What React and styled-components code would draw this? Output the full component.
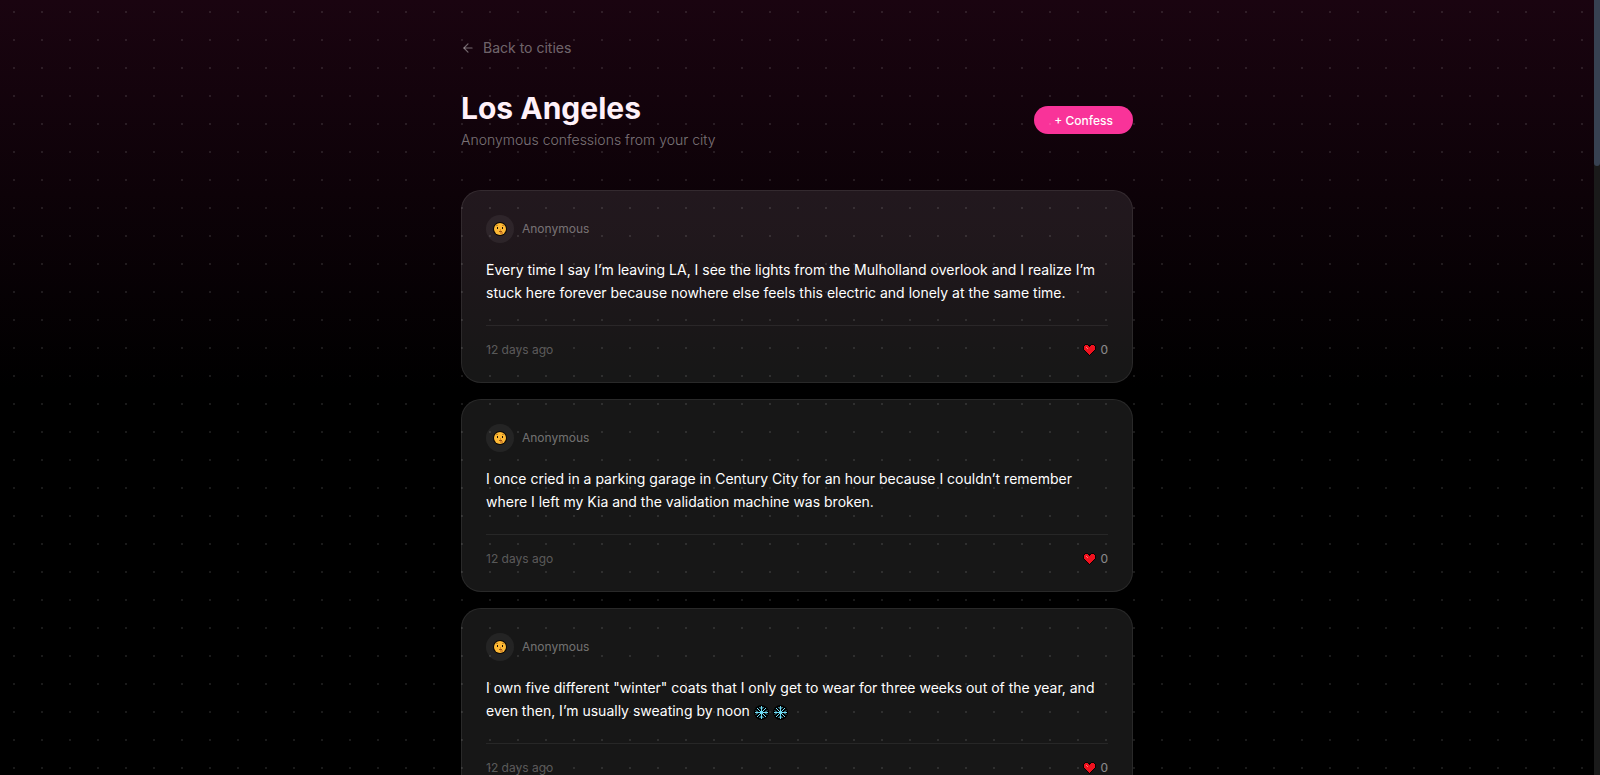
import styled, {createGlobalStyle} from 'styled-components';
import {ArrowLeft} from 'lucide-react';

const GlobalStyle = createGlobalStyle`
    * {
        box-sizing: border-box;
    }

    body {
        margin: 0;
        background-color: #000;
        color: #fff;
        font-family: Inter, sans-serif;
    }
`

const Screen = styled.div`
    position: relative;
    display: flex;
    height: 100vh;
    overflow: hidden;
    background: linear-gradient(to bottom, #1a0410 0%, #000 50%);
`

const Page = styled.main`
    flex: 1;
    padding: 38px 24px 0;
`

const Dots = styled.div`
    position: absolute;
    inset: 0 6px 0 0;
    pointer-events: none;
    background-image: radial-gradient(circle, rgba(255, 255, 255, 0.1) 1px, transparent 1px);
    background-size: 28px 28px;
    background-position: 0 -2px;
`

const Column = styled.div`
    max-width: 672px;
    margin: 0 auto;
`

const BackLink = styled.a`
    display: inline-flex;
    align-items: center;
    gap: 8px;
    color: rgba(255, 255, 255, 0.4);
    font-size: 14px;
    line-height: 20px;
    text-decoration: none;
`

const Header = styled.header`
    display: flex;
    align-items: center;
    justify-content: space-between;
    margin: 31px 0 40px;
`

const Title = styled.h1`
    margin: 0;
    font-size: 30px;
    line-height: 36px;
    font-weight: 700;
    color: #fff1f9;
`

const Subtitle = styled.p`
    margin: 4px 0 0;
    font-size: 14px;
    line-height: 20px;
    font-weight: 300;
    color: rgba(255, 255, 255, 0.45);
`

const Button = styled.button`
    height: 28px;
    padding: 0 20px;
    border: none;
    border-radius: 14px;
    background-color: #f93399;
    color: #fff;
    font-family: inherit;
    font-size: 12px;
    font-weight: 500;
    cursor: pointer;
`

const List = styled.div`
    display: flex;
    flex-direction: column;
    gap: 16px;
`

const Card = styled.article`
    padding: 24px;
    border: 1px solid rgba(255, 255, 255, 0.08);
    border-radius: 20px;
    background-color: rgba(255, 255, 255, 0.09);
`

const Author = styled.div`
    display: flex;
    align-items: center;
    gap: 8px;
    font-size: 12px;
    line-height: 16px;
    color: rgba(255, 255, 255, 0.4);
`

const Avatar = styled.span`
    display: flex;
    align-items: center;
    justify-content: center;
    width: 28px;
    height: 28px;
    border-radius: 50%;
    background-color: rgba(255, 255, 255, 0.06);
`

const Text = styled.p`
    margin: 15px 0 21px;
    font-size: 14px;
    line-height: 23px;
`

const Flakes = styled.span`
    display: inline-flex;
    gap: 4px;
    margin-left: 4px;
    vertical-align: middle;
`

const Footer = styled.footer`
    display: flex;
    align-items: center;
    justify-content: space-between;
    padding-top: 16px;
    border-top: 1px solid rgba(255, 255, 255, 0.07);
    font-size: 12px;
    line-height: 16px;
    color: rgba(255, 255, 255, 0.3);
`

const Like = styled.button`
    display: flex;
    align-items: center;
    gap: 4px;
    padding: 0;
    border: none;
    background: none;
    color: rgba(255, 255, 255, 0.5);
    font: inherit;
    cursor: pointer;
`

const Rail = styled.div`
    width: 6px;
    background-color: #1a1a1a;
`

const Thumb = styled.div`
    height: 166px;
    border-radius: 0 0 3px 3px;
    background-color: #374151;
`

const ShushFace = () => (
    <svg width="14" height="14" viewBox="0 0 14 14" aria-hidden="true">
        <circle cx="7" cy="7" r="7" fill="#0b0705" />
        <circle cx="7" cy="7" r="6" fill="#fdb935" />
        <path fill="#c98520" d="M3 3h2v1H3zM9 3h2v1H9z" />
        <path fill="#1a0f05" d="M4 5h1v2H4zM9 5h1v2H9z" />
        <path fill="#d98a2b" d="M7 7h1v2h1v1h1v2H7z" />
        <path fill="#9c5212" d="M6 9h3v1H6z" />
    </svg>
)

const Heart = () => (
    <svg width="13" height="12" viewBox="0 0 13 12" shapeRendering="crispEdges" aria-hidden="true">
        <path fill="#0a0202" d="M2 0h3v1h3V0h3v1h1v1h1v4h-1v1h-1v1h-1v1H9v1H8v1H7v1H6v-1H5v-1H4V9H3V8H2V7H1V6H0V2h1V1h1z" />
        <path fill="#f0121f" d="M2 1h3v1h1v1h1V2h1V1h3v1h1v4h-1v1h-1v1H9v1H8v1H7v1H6v-1H5V9H4V8H3V7H2V6H1V2h1z" />
        <path fill="#ff7a6b" d="M3 3h1v1H3zM4 4h1v1H4z" />
    </svg>
)

const Snowflake = () => (
    <svg width="15" height="15" viewBox="0 0 15 15" aria-hidden="true">
        <circle cx="7.5" cy="7.5" r="7.5" fill="#000" />
        <g fill="none" stroke="#6fdcf5">
            <path d="M7.5 1v13M1 7.5h13M3 3l9 9M12 3l-9 9" />
            <path d="M5.5 2l2 2l2-2M5.5 13l2-2l2 2M2 5.5l2 2l-2 2M13 5.5l-2 2l2 2" />
        </g>
    </svg>
)

const confessions = [
    {id: 1, flakes: false, text: 'Every time I say I’m leaving LA, I see the lights from the Mulholland overlook and I realize I’m stuck here forever because nowhere else feels this electric and lonely at the same time.'},
    {id: 2, flakes: false, text: 'I once cried in a parking garage in Century City for an hour because I couldn’t remember where I left my Kia and the validation machine was broken.'},
    {id: 3, flakes: true, text: 'I own five different "winter" coats that I only get to wear for three weeks out of the year, and even then, I’m usually sweating by noon'},
]

const Confession = ({text, flakes}) => (
    <Card>
        <Author>
            <Avatar><ShushFace /></Avatar>
            Anonymous
        </Author>
        <Text>
            {text}
            {flakes && <Flakes><Snowflake /><Snowflake /></Flakes>}
        </Text>
        <Footer>
            <span>12 days ago</span>
            <Like type="button"><Heart />0</Like>
        </Footer>
    </Card>
)

export default function App(){
    return(
        <Screen>
            <GlobalStyle />
            <Page>
                <Column>
                    <BackLink href="#"><ArrowLeft size={14} />Back to cities</BackLink>
                    <Header>
                        <div>
                            <Title>Los Angeles</Title>
                            <Subtitle>Anonymous confessions from your city</Subtitle>
                        </div>
                        <Button type="button">+ Confess</Button>
                    </Header>
                    <List>
                        {confessions.map(item => (
                            <Confession key={item.id} text={item.text} flakes={item.flakes} />
                        ))}
                    </List>
                </Column>
            </Page>
            <Rail><Thumb /></Rail>
            <Dots />
        </Screen>
    )
}
